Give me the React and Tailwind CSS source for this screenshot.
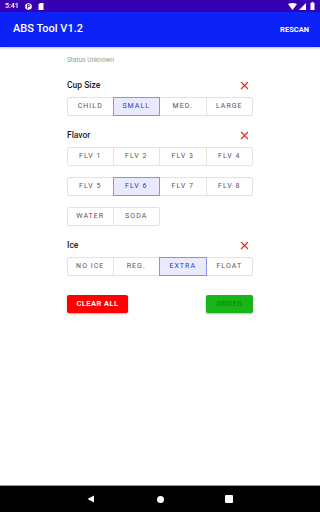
import React, { useState } from 'react';

const font = { fontFamily: 'Roboto, "Liberation Sans", sans-serif' };

function XMark() {
    return (
        <svg width="9" height="9" viewBox="0 0 9 9" className="mr-[4px]">
            <path d="M1 1 L8 8 M8 1 L1 8" stroke="#ff1a1a" strokeWidth="1.1" />
        </svg>
    );
}

function Segments({ items, selected, onPick }) {
    return (
        <div className="grid grid-cols-4">
            {items.map((label, i) => {
                const on = label === selected;
                return (
                    <button
                        key={label}
                        onClick={() => onPick(label)}
                        className={
                            'h-[19px] flex items-center justify-center text-[7px] font-normal tracking-[0.15em] border ' +
                            (i > 0 ? '-ml-px ' : '') +
                            (i === 0 ? 'rounded-l-[2px] ' : '') +
                            (i === items.length - 1 ? 'rounded-r-[2px] ' : '') +
                            (on
                                ? 'relative z-10 bg-[#e9ebfd] border-[#8d90ea] text-[#2a35d8]'
                                : 'bg-white border-[#e2e2e2] text-[#555555]')
                        }
                    >
                        {label}
                    </button>
                );
            })}
        </div>
    );
}

function SectionLabel({ children, mt }) {
    return (
        <div className={`${mt} h-[14px] flex items-center justify-between`}>
            <span className="text-[8.5px] font-medium text-[#1c1c1c]">{children}</span>
            <XMark />
        </div>
    );
}

export default function App() {
    const [cup, setCup] = useState('SMALL');
    const [flavor, setFlavor] = useState('FLV 6');
    const [ice, setIce] = useState('EXTRA');

    return (
        <div className="w-[320px] h-[512px] flex flex-col bg-white overflow-hidden" style={font}>
            {/* status bar */}
            <div className="h-[12px] bg-[#3700b3] flex items-center justify-between px-[5px] text-white">
                <div className="flex items-center gap-[6px]">
                    <span className="text-[7px] font-medium">5:41</span>
                    <svg width="7" height="7" viewBox="0 0 7 7">
                        <circle cx="3.5" cy="3.5" r="3.3" fill="white" />
                        <path d="M2.6 1.6 V5.4 M2.6 1.6 H4 A1 1 0 0 1 4 3.6 H2.6" stroke="#3700b3" strokeWidth="0.9" fill="none" />
                    </svg>
                    <svg width="6" height="7" viewBox="0 0 6 7">
                        <path d="M2 0 H5.5 V7 H0.5 V1.5 Z" fill="white" />
                    </svg>
                </div>
                <div className="flex items-center gap-[2px]">
                    <svg width="9" height="7" viewBox="0 0 9 7">
                        <path d="M0 1 Q4.5 -1 9 1 L4.5 7 Z" fill="white" />
                    </svg>
                    <svg width="7" height="7" viewBox="0 0 7 7">
                        <path d="M7 0 V7 H0 Z" fill="white" />
                    </svg>
                    <svg width="5" height="8" viewBox="0 0 5 8" className="ml-[2px]">
                        <rect x="1.5" y="0" width="2" height="1" fill="white" />
                        <rect x="0.5" y="1" width="4" height="7" fill="white" />
                    </svg>
                </div>
            </div>

            {/* app bar */}
            <div className="h-[35px] bg-[#0c22f6] flex items-center justify-between pl-[13px] pr-[11px] shadow-[0_1px_2px_rgba(0,0,0,0.25)] relative z-10">
                <span className="text-[11px] font-medium text-white">ABS Tool V1.2</span>
                <span className="text-[7.5px] font-bold text-white">RESCAN</span>
            </div>

            {/* content */}
            <div className="flex-1 flex flex-col pl-[67px] w-[253px]">
                <div className="mt-[7px] h-[14px] flex items-center text-[6.5px] text-[#9a9a9a]">Status Unknown</div>

                <SectionLabel mt="mt-[10px]">Cup Size</SectionLabel>
                <div className="mt-[5px]">
                    <Segments items={['CHILD', 'SMALL', 'MED.', 'LARGE']} selected={cup} onPick={setCup} />
                </div>

                <SectionLabel mt="mt-[12px]">Flavor</SectionLabel>
                <div className="mt-[5px] flex flex-col gap-[11px]">
                    <Segments items={['FLV 1', 'FLV 2', 'FLV 3', 'FLV 4']} selected={flavor} onPick={setFlavor} />
                    <Segments items={['FLV 5', 'FLV 6', 'FLV 7', 'FLV 8']} selected={flavor} onPick={setFlavor} />
                    <Segments items={['WATER', 'SODA']} selected={flavor} onPick={setFlavor} />
                </div>

                <SectionLabel mt="mt-[12px]">Ice</SectionLabel>
                <div className="mt-[5px]">
                    <Segments items={['NO ICE', 'REG.', 'EXTRA', 'FLOAT']} selected={ice} onPick={setIce} />
                </div>

                <div className="mt-[19px] flex justify-between">
                    <button className="w-[61px] h-[18px] rounded-[2px] bg-[#ff0000] text-white text-[7.5px] font-bold tracking-[0.06em] shadow-[0_1px_2px_rgba(0,0,0,0.3)]">
                        CLEAR ALL
                    </button>
                    <button className="w-[47px] h-[18px] rounded-[2px] bg-[#18b418] text-[#0f8a0f] text-[7.5px] font-medium tracking-[0.06em] shadow-[0_1px_2px_rgba(0,0,0,0.3)]">
                        ORDER
                    </button>
                </div>
            </div>

            {/* nav bar */}
            <div className="h-[27px] bg-black border-t border-[#9a9a9a] flex items-center">
                <div className="flex w-full items-center">
                    <svg width="8" height="8" viewBox="0 0 8 8" className="ml-[87px]">
                        <path d="M7 0.5 V7.5 L0.5 4 Z" fill="white" />
                    </svg>
                    <svg width="7" height="7" viewBox="0 0 7 7" className="ml-[62px]">
                        <circle cx="3.5" cy="3.5" r="3.5" fill="white" />
                    </svg>
                    <svg width="8" height="8" viewBox="0 0 8 8" className="ml-[61px]">
                        <rect x="0" y="0" width="8" height="8" rx="1" fill="white" />
                    </svg>
                </div>
            </div>
        </div>
    );
}
